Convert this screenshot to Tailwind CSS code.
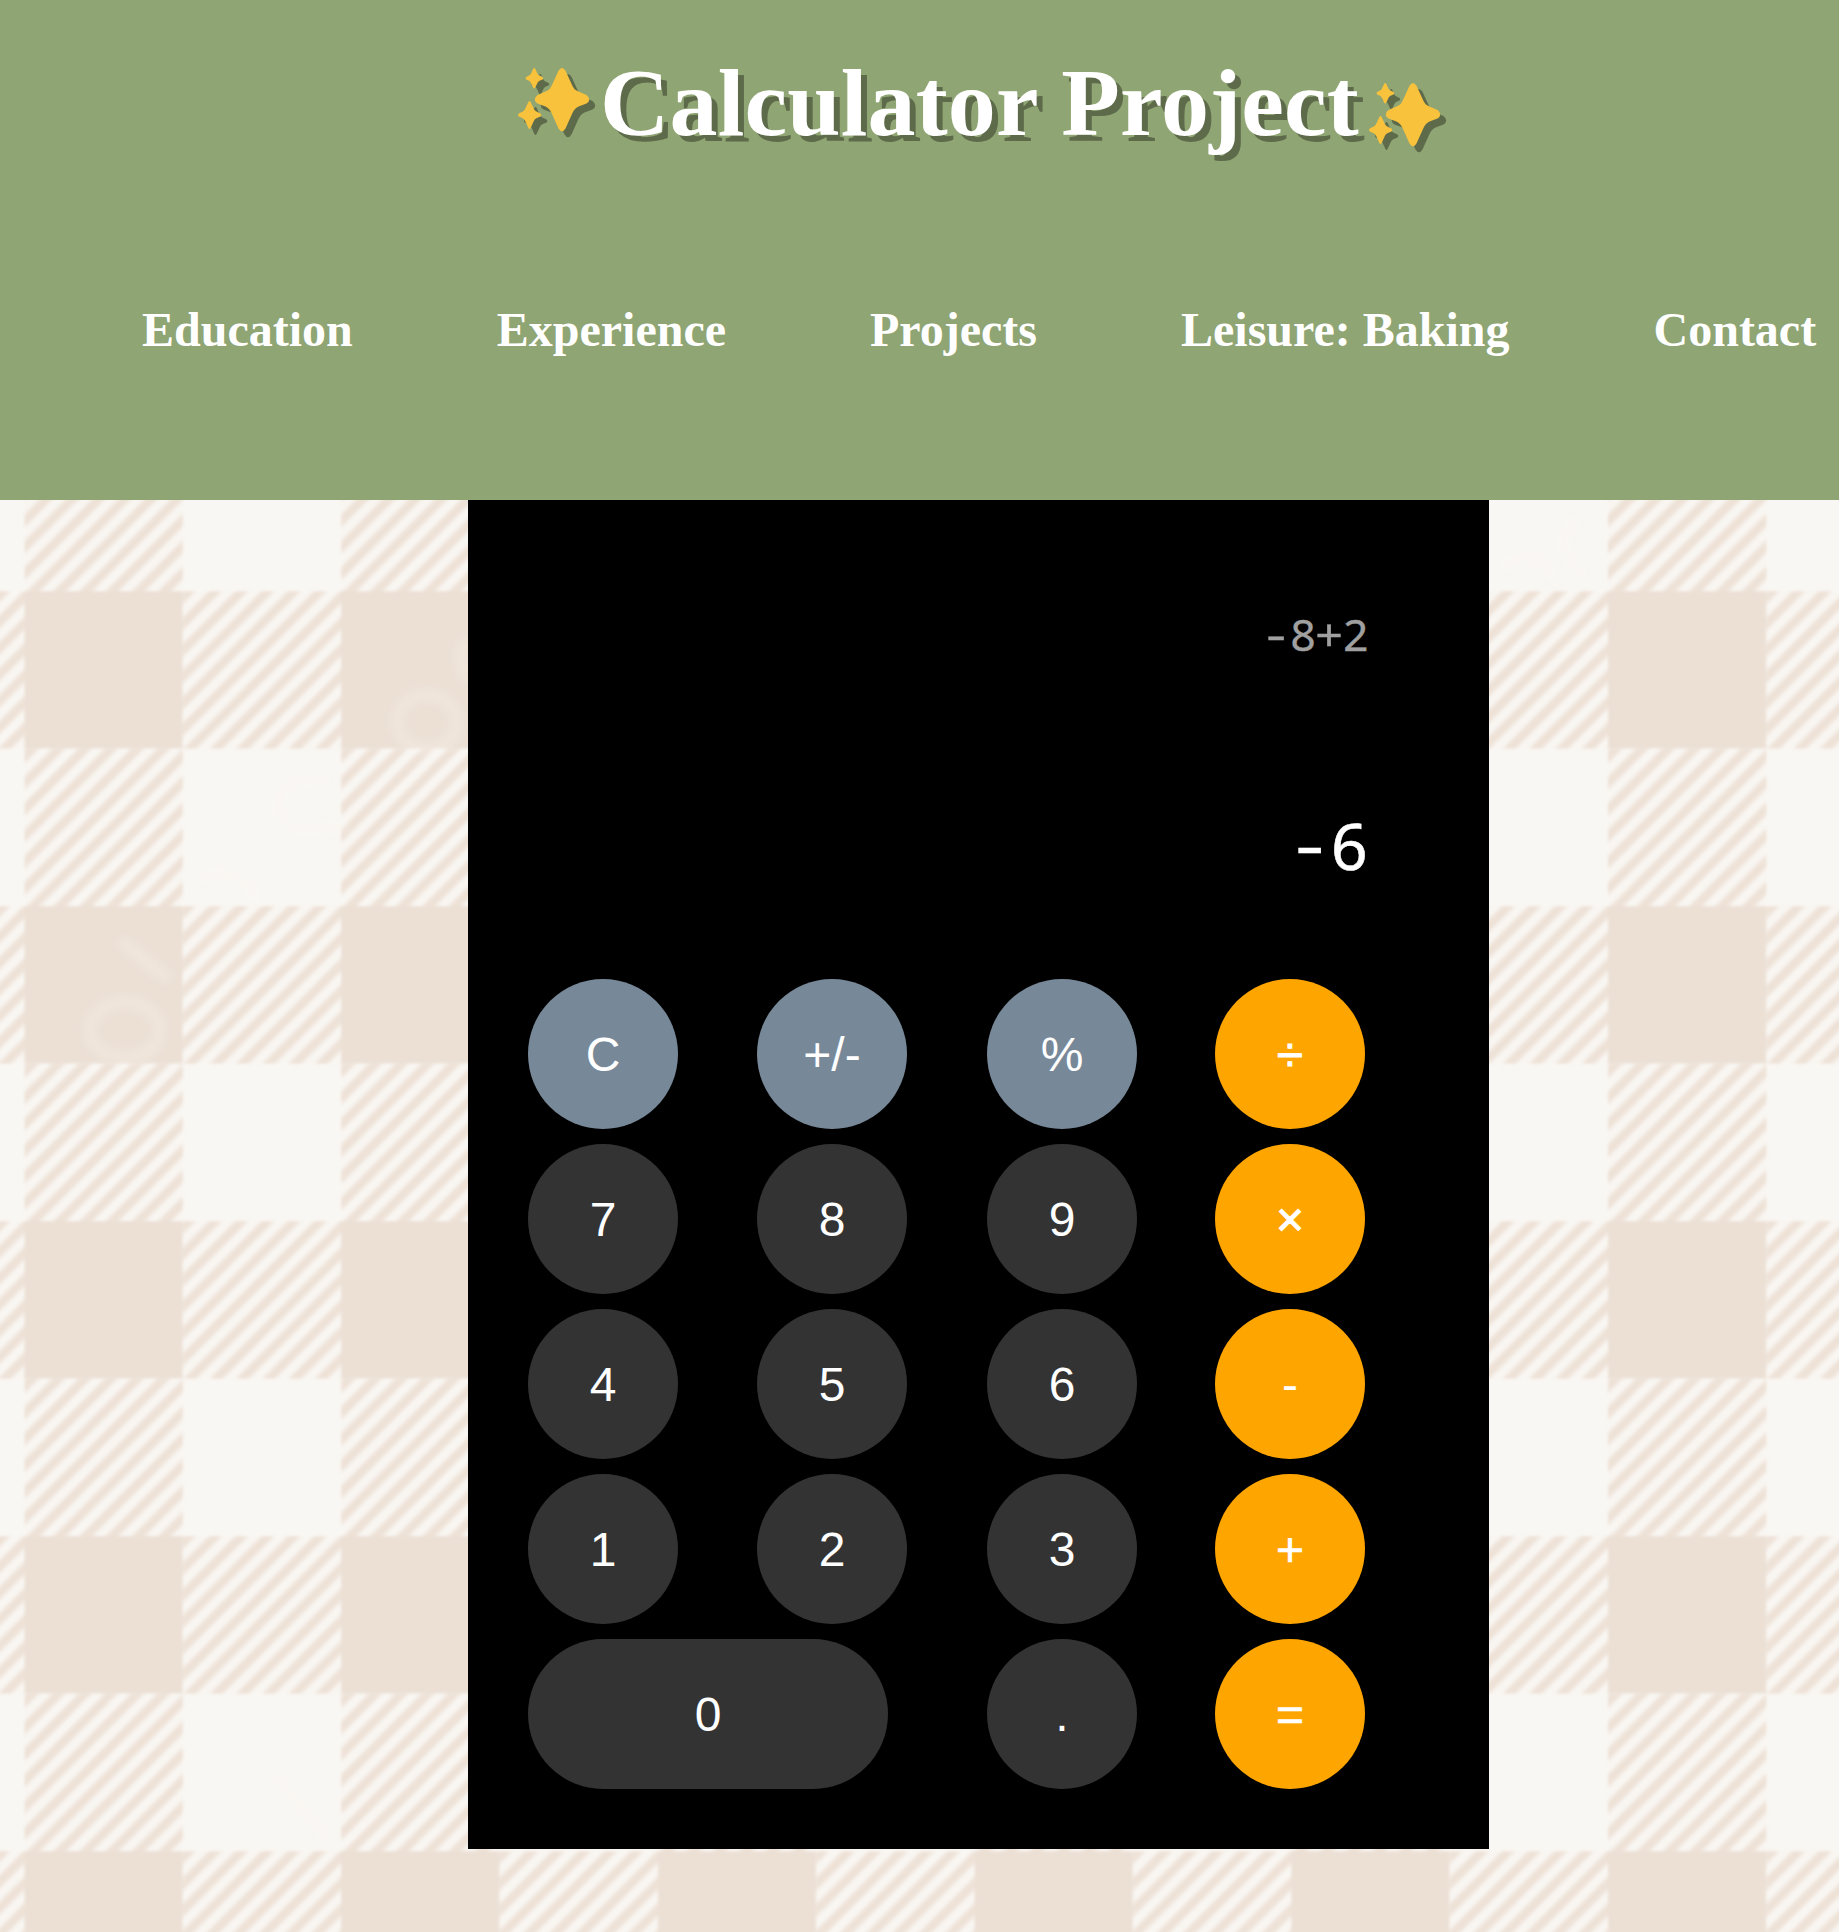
<!DOCTYPE html>
<html lang="en">
<head>
<meta charset="utf-8">
<title>Calculator Project</title>
<script src="https://cdn.jsdelivr.net/npm/@tailwindcss/browser@4"></script>
</head>
<body class="relative h-[1932px] w-[1839px] overflow-hidden bg-[#f9f7f3]">
<!-- gingham tablecloth backdrop -->
<svg class="absolute left-0 top-0" width="1839" height="1932" aria-hidden="true">
  <defs>
    <linearGradient id="stripe" gradientUnits="userSpaceOnUse" x1="-3" y1="-3" x2="10.195" y2="10.125" spreadMethod="repeat">
      <stop offset="0" stop-color="#f9f7f3"/><stop offset=".16" stop-color="#f8f5f1"/><stop offset=".36" stop-color="#eee2d7"/><stop offset=".64" stop-color="#eee2d7"/><stop offset=".84" stop-color="#f8f5f1"/><stop offset="1" stop-color="#f9f7f3"/>
    </linearGradient>
    <pattern id="gingham" patternUnits="userSpaceOnUse" x="24.5" y="591.2" width="316.7" height="315">
      <rect width="316.7" height="315" fill="#f9f7f3"/>
      <rect width="158.35" height="157.5" fill="#ece0d5"/>
      <rect x="158.35" width="158.35" height="157.5" fill="url(#stripe)"/>
      <rect y="157.5" width="158.35" height="157.5" fill="url(#stripe)"/>
    </pattern>
    <filter id="soft" color-interpolation-filters="sRGB"><feGaussianBlur stdDeviation="1.8"/></filter>
    <filter id="haze" color-interpolation-filters="sRGB"><feGaussianBlur stdDeviation="4"/></filter>
  </defs>
  <rect x="-10" y="480" width="1860" height="1470" fill="url(#gingham)" filter="url(#soft)"/>
  <g fill="none" stroke="#fffaf5" stroke-opacity=".22" stroke-width="14" filter="url(#haze)">
    <ellipse cx="427" cy="722" rx="30" ry="27"/>
    <path d="M468 640q-14 18 0 40M330 785q-50-15-52 20t70 20M200 880q30-20 60 20"/>
    <ellipse cx="125" cy="1030" rx="35" ry="28"/>
    <path d="M120 940l50 40M270 1770l60 70M1580 520q-35 20 5 55M1500 570q30-30 55 10"/>
  </g>
</svg>

<header class="relative h-[500px] bg-[#8fa573] font-['Liberation_Serif',serif] font-bold text-white">
  <h1 class="flex items-start pl-[518px] pt-[48px] text-[96px] leading-[110px] tracking-[0.15px] whitespace-nowrap text-shadow-[6px_6px_0_#5e6b4b]">
    <svg class="mt-5 mr-[9px] h-[63px] w-[73px] shrink-0 overflow-visible drop-shadow-[6px_6px_0_#5e6b4b]" viewBox="0 0 73 63" fill="#f9c23c" aria-hidden="true">
      <path d="M40.5 2.7Q44 -2.7 47.5 2.7L54 17Q56 22 60.500 23.500L68.500 27Q74 31.500 68.500 35.500L60.500 38.500Q56 40.500 54 46L47.500 60.500Q44 66 40.500 60.500L34 46Q32 40.500 27.500 38.500L19.500 35.500Q14 31.500 19.500 27L27.500 23.500Q32 22 34 17Z"/>
      <path d="M15.200 .8Q16.200 -.7 17.200 .8L19.400 5.400Q20 7 21.500 7.600L24.500 9Q26 10.300 24.500 11.500L21.500 12.700Q20 13.500 19.400 15L17.200 19.700Q16.200 21.200 15.200 19.700L13 15Q12.400 13.500 11 12.700L8.200 11.500Q6.800 10.300 8.200 9L11 7.600Q12.400 7 13 5.400Z"/>
      <path d="M10.500 33.800Q11.500 32.200 12.500 33.800L15.700 40.500Q16.400 42.600 18.300 43.400L22.500 45.600Q24 47 22.500 48.400L18.300 50.300Q16.400 51.200 15.700 53.200L12.500 60.200Q11.500 61.800 10.500 60.200L7.300 53.200Q6.600 51.200 4.700 50.300L.8 48.400Q-.7 47 .8 45.600L4.700 43.400Q6.600 42.600 7.300 40.500Z"/>
    </svg><span>Calculator Project</span><svg class="mt-[35px] ml-[10px] h-[63px] w-[73px] shrink-0 overflow-visible drop-shadow-[6px_6px_0_#5e6b4b]" viewBox="0 0 73 63" fill="#f9c23c" aria-hidden="true">
      <path d="M40.5 2.7Q44 -2.7 47.5 2.7L54 17Q56 22 60.500 23.500L68.500 27Q74 31.500 68.500 35.500L60.500 38.500Q56 40.500 54 46L47.500 60.500Q44 66 40.500 60.500L34 46Q32 40.500 27.500 38.500L19.500 35.500Q14 31.500 19.500 27L27.500 23.500Q32 22 34 17Z"/>
      <path d="M15.200 .8Q16.200 -.7 17.200 .8L19.400 5.400Q20 7 21.500 7.600L24.500 9Q26 10.300 24.500 11.500L21.500 12.700Q20 13.500 19.400 15L17.200 19.700Q16.200 21.200 15.200 19.700L13 15Q12.400 13.500 11 12.700L8.200 11.500Q6.800 10.300 8.200 9L11 7.600Q12.400 7 13 5.400Z"/>
      <path d="M10.500 33.800Q11.500 32.200 12.500 33.800L15.700 40.500Q16.400 42.600 18.300 43.400L22.500 45.600Q24 47 22.500 48.400L18.300 50.300Q16.400 51.200 15.700 53.200L12.500 60.200Q11.500 61.800 10.500 60.200L7.300 53.200Q6.600 51.200 4.700 50.300L.8 48.400Q-.7 47 .8 45.600L4.700 43.400Q6.600 42.600 7.300 40.500Z"/>
    </svg>
  </h1>
  <nav class="mt-[145px] flex gap-36 pl-[142px] text-5xl leading-[54px] whitespace-nowrap">
    <a>Education</a><a>Experience</a><a>Projects</a><a>Leisure: Baking</a><a>Contact</a>
  </nav>
</header>

<main class="relative ml-[468px] h-[1349px] w-[1021px] bg-black px-[60px] pt-[98px] font-['Liberation_Sans',sans-serif] text-5xl text-white">
  <div class="flex h-[72px] items-center justify-end pr-[60px] font-['Noto_Sans',sans-serif] text-[44px] leading-[72px] text-[#a0a0a0] [-webkit-text-stroke:0.4px_#a0a0a0]">
    <span class="w-[26.4px] -translate-y-px scale-x-140 text-center">-</span><span class="w-[26.4px] text-center">8</span><span class="w-[26.4px] scale-x-110 text-center">+</span><span class="w-[26.4px] text-center">2</span>
  </div>
  <div class="mt-[126px] flex h-[100px] items-center justify-end pr-[60px] font-['Noto_Sans',sans-serif] text-[64px] leading-[100px] [-webkit-text-stroke:0.6px_white]">
    <span class="w-[39.6px] -translate-y-0.5 scale-x-140 text-center">-</span><span class="w-[39.6px] text-center">6</span>
  </div>
  <div class="mt-[83px] grid grid-cols-[229px_230px_228px_150px] gap-y-[15px] leading-[148px] [&>button]:h-[150px] [&>button]:w-[150px] [&>button]:rounded-full [&>button]:pt-0.5">
    <button class="bg-[#778899]">C</button><button class="bg-[#778899]">+/-</button><button class="bg-[#778899]">%</button><button class="bg-[#ffa500] [-webkit-text-stroke:0.8px_white]">÷</button>
    <button class="bg-[#333333]">7</button><button class="bg-[#333333]">8</button><button class="bg-[#333333]">9</button><button class="bg-[#ffa500] [-webkit-text-stroke:1px_white]">×</button>
    <button class="bg-[#333333]">4</button><button class="bg-[#333333]">5</button><button class="bg-[#333333]">6</button><button class="bg-[#ffa500]">-</button>
    <button class="bg-[#333333]">1</button><button class="bg-[#333333]">2</button><button class="bg-[#333333]">3</button><button class="bg-[#ffa500] [-webkit-text-stroke:0.6px_white]">+</button>
    <button class="col-span-2 w-[360px]! bg-[#333333]">0</button><button class="bg-[#333333]">.</button><button class="bg-[#ffa500] [-webkit-text-stroke:0.6px_white]">=</button>
  </div>
</main>
</body>
</html>
